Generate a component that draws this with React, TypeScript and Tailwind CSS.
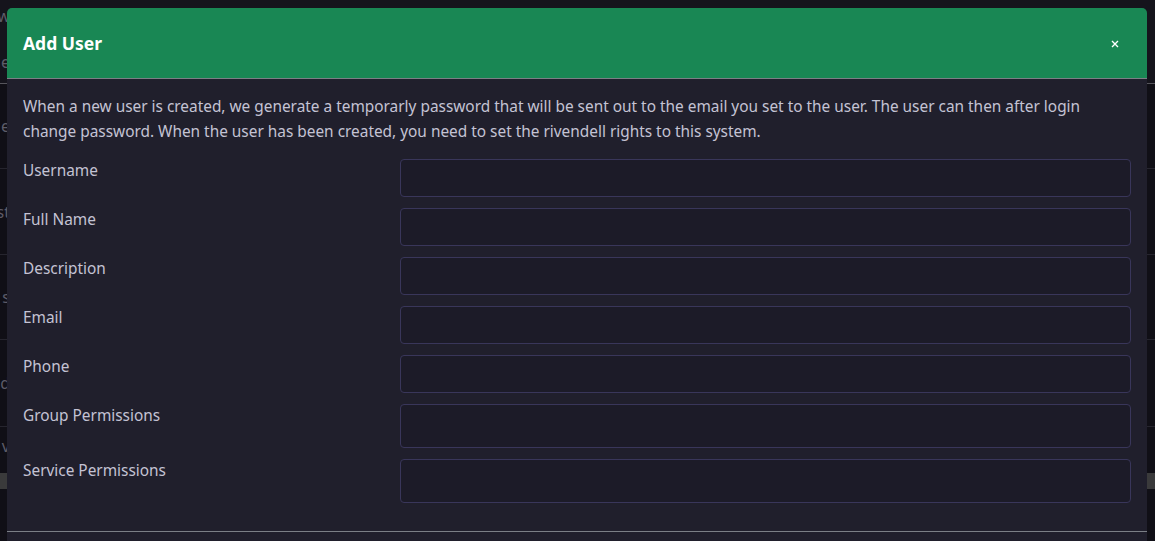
import React from "react";

const fields: { label: string; tall?: boolean }[] = [
  { label: "Username" },
  { label: "Full Name" },
  { label: "Description" },
  { label: "Email" },
  { label: "Phone" },
  { label: "Group Permissions", tall: true },
  { label: "Service Permissions", tall: true },
];

function BgRow({ text, className }: { text: string; className: string }) {
  return (
    <div className={`flex items-center border-b ${className}`}>
      <div className="w-[10px] overflow-hidden flex justify-end whitespace-nowrap text-[16px] text-[#5d5c68]">
        <span>{text}</span>
      </div>
    </div>
  );
}

export default function App() {
  return (
    <div
      className="relative w-[1155px] h-[541px] overflow-hidden bg-[#100f16]"
      style={{ fontFamily: '"Noto Sans", "Liberation Sans", sans-serif' }}
    >
      {/* background page */}
      <div className="flex flex-col">
        <div className="h-[84px] flex flex-col border-b border-[#56555c] bg-[#15141c]">
          <div className="h-[32px] flex items-center">
            <div className="w-[10px] overflow-hidden flex justify-end text-[16px] text-[#5d5c68]">
              <span>w</span>
            </div>
          </div>
          <div className="flex-1 flex items-center pt-[8px]">
            <div className="w-[10px] overflow-hidden flex justify-end text-[16px] text-[#5d5c68]">
              <span>e</span>
            </div>
          </div>
        </div>
        <BgRow text="e" className="h-[85px] border-[#26252e]" />
        <BgRow text="st" className="h-[86px] border-[#26252e]" />
        <BgRow text="s" className="h-[85px] border-[#26252e]" />
        <BgRow text="d" className="h-[87px] border-[#26252e]" />
        <div className="h-[85px] flex flex-col">
          <div className="h-[38px] flex items-center">
            <div className="w-[10px] overflow-hidden flex justify-end text-[16px] text-[#5d5c68]">
              <span>v</span>
            </div>
          </div>
          <div className="h-[8px]" />
          <div className="h-[16px] bg-[#3a3a3b]" />
        </div>
        <div className="flex-1 bg-[#0c0b10] h-[40px]" />
      </div>

      {/* modal */}
      <div className="absolute left-[7px] top-[8px] w-[1140px] rounded-t-[5px] overflow-hidden bg-[#201f2c]">
        <div className="h-[71px] bg-[#198754] border-b border-[#7b7f86] flex items-center justify-between pl-[16px] pr-[28px] pt-[1px]">
          <h5 className="text-[17.5px] font-bold text-white leading-none">Add User</h5>
          <svg width="8" height="8" viewBox="0 0 8 8" className="text-white">
            <path d="M1 1 L7 7 M7 1 L1 7" stroke="currentColor" strokeWidth="1.4" />
          </svg>
        </div>
        <div className="px-4 pt-[15px] pb-[17px] text-[#c4c3d4] text-[15.4px] leading-[25px]">
          <p className="mb-[15px]">
            When a new user is created, we generate a temporarly password that will be sent out to the email you set to the
            user. The user can then after login change password. When the user has been created, you need to set the
            rivendell rights to this system.
          </p>
          {fields.map((f) => (
            <div key={f.label} className="flex mb-[11px]">
              <label className="w-[377px] pt-[1px] leading-[22px]">{f.label}</label>
              <div
                className={`flex-1 ${f.tall ? "h-[44px]" : "h-[38px]"} rounded-[4px] border border-[#39365a] bg-[#1c1b28]`}
              />
            </div>
          ))}
        </div>
        <div className="border-t border-[#7b7f86] h-[12px]" />
      </div>
    </div>
  );
}
